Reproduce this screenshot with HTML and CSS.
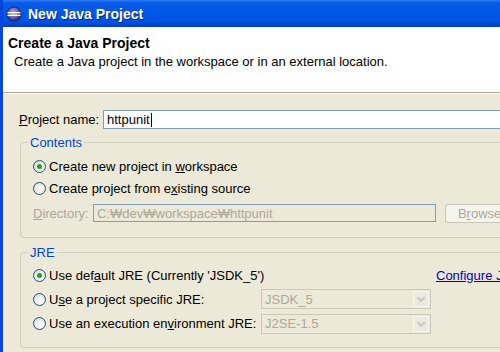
FILE: index.html
```html
<!DOCTYPE html>
<html lang="en">
<head>
    <meta charset="UTF-8">
    <title>New Java Project</title>
    <link rel="stylesheet" href="styles.css">
</head>
<body>
    <div class="window">
        <div class="titlebar">
            <svg class="app-icon" width="16" height="16" viewBox="0 0 16 16">
                <defs>
                    <radialGradient id="eg" cx="0.45" cy="0.4" r="0.6">
                        <stop offset="0" stop-color="#b8b4e8"/>
                        <stop offset="0.6" stop-color="#6a64b0"/>
                        <stop offset="1" stop-color="#2a2460"/>
                    </radialGradient>
                </defs>
                <circle cx="8" cy="8" r="7" fill="url(#eg)" stroke="#1e1a4a" stroke-width="0.8"/>
                <rect x="1.5" y="6" width="13" height="1.3" fill="#fff"/>
                <rect x="1.5" y="8.7" width="13" height="1.3" fill="#fff"/>
            </svg>
            <span class="title">New Java Project</span>
            <div class="title-btn"></div>
        </div>

        <div class="banner">
            <div class="banner-title">Create a Java Project</div>
            <div class="banner-desc">Create a Java project in the workspace or in an external location.</div>
        </div>

        <div class="content">
            <div class="name-row">
                <span class="name-label"><u>P</u>roject name:</span>
                <div class="field"><span>httpunit</span><span class="caret"></span></div>
            </div>

            <fieldset class="group group-contents">
                <legend>Contents</legend>
                <div class="option"><span class="radio checked"></span><span>Create new project in <u>w</u>orkspace</span></div>
                <div class="option"><span class="radio"></span><span>Create project from e<u>x</u>isting source</span></div>
                <div class="dir-row">
                    <span class="dir-label"><u>D</u>irectory:</span>
                    <div class="field disabled"><span>C:₩dev₩workspace₩httpunit</span></div>
                    <div class="btn">B<u>r</u>owse...</div>
                </div>
            </fieldset>

            <fieldset class="group group-jre">
                <legend>JRE</legend>
                <div class="jre-grid">
                    <div class="option span2"><span class="radio checked"></span><span>Use def<u>a</u>ult JRE (Currently 'JSDK_5')</span></div>
                    <a class="link" href="#">Configure JREs...</a>
                    <div class="option"><span class="radio"></span><span>U<u>s</u>e a project specific JRE:</span></div>
                    <div class="combo"><span>JSDK_5</span><span class="combo-btn"></span></div>
                    <div></div>
                    <div class="option"><span class="radio"></span><span>Use an execution en<u>v</u>ironment JRE:</span></div>
                    <div class="combo"><span>J2SE-1.5</span><span class="combo-btn"></span></div>
                    <div></div>
                </div>
            </fieldset>
        </div>
    </div>
</body>
</html>
```

FILE: styles.css
```css
body {
    margin: 0;
    background-color: #ece9d8;
    font-family: "Liberation Sans", "Noto Sans CJK KR", sans-serif;
    font-size: 13px;
    color: #000;
    overflow: hidden;
}
.window {
    width: 540px;
    height: 352px;
    border-left: 3px solid #0a46dc;
}
.titlebar {
    height: 27px;
    display: flex;
    align-items: center;
    padding-left: 3px;
    background: linear-gradient(#2a7df4 0, #0a5ae6 3px, #0058e8 50%, #0052e0 80%, #003fcc 100%);
}
.app-icon {
    margin-right: 6px;
}
.title {
    color: #fff;
    font-weight: bold;
    font-size: 14px;
    text-shadow: 1px 1px 0 #0a2a80;
}
.title-btn {
    margin-left: auto;
    margin-right: 20px;
    width: 19px;
    height: 19px;
    border: 1px solid #c8d8f8;
    border-radius: 3px;
    background: #2f6ff0;
}
.banner {
    background-color: #fff;
    height: 66px;
    border-bottom: 1px solid #aca899;
    padding-left: 5px;
    box-sizing: border-box;
}
.banner-title {
    font-weight: bold;
    font-size: 14px;
    line-height: 17px;
    padding-top: 8px;
}
.banner-desc {
    line-height: 15px;
    margin-top: 2px;
    padding-left: 6px;
}
.content {
    border-top: 1px solid #fff;
    padding: 16px 0 0 16px;
}
.name-row {
    display: flex;
    align-items: center;
    height: 19px;
}
.name-label {
    width: 84px;
}
.field {
    flex: 1;
    height: 19px;
    box-sizing: border-box;
    border: 1px solid #7f9db9;
    background-color: #fff;
    padding-left: 3px;
    display: flex;
    align-items: center;
    white-space: nowrap;
}
.caret {
    display: inline-block;
    width: 1px;
    height: 14px;
    background-color: #000;
    margin-left: 1px;
}
.group {
    margin: 6px 0 0 1px;
    border: 1px solid #d0d0bf;
    border-radius: 4px;
    padding: 0 0 0 12px;
}
.group legend {
    color: #0046d5;
    padding: 0 2px;
    margin-left: -5px;
    line-height: 15px;
}
.option {
    display: flex;
    align-items: center;
    height: 22px;
    white-space: nowrap;
}
.radio {
    flex: none;
    width: 13px;
    height: 13px;
    box-sizing: border-box;
    border: 1px solid #1c5180;
    border-radius: 50%;
    background: radial-gradient(circle at 65% 65%, #f6f6f2 30%, #d8d6cc 100%);
    margin-right: 3px;
    display: flex;
    align-items: center;
    justify-content: center;
}
.radio.checked::after {
    content: "";
    width: 5px;
    height: 5px;
    border-radius: 50%;
    background-color: #21a121;
}
.group-contents {
    padding-top: 5px;
    padding-bottom: 10px;
}
.dir-row {
    display: flex;
    align-items: center;
    height: 28px;
}
.dir-label {
    width: 60px;
    color: #aca899;
}
.dir-row .field {
    flex: none;
    width: 343px;
    height: 18px;
    background-color: #ece9d8;
    color: #aca899;
}
.btn {
    margin-left: 9px;
    width: 80px;
    height: 19px;
    box-sizing: border-box;
    border: 1px solid #c9c7ba;
    border-radius: 3px;
    background-color: #f5f4ea;
    color: #aca899;
    line-height: 17px;
    text-align: center;
}
.group-jre {
    margin-top: 7px;
    padding-top: 3px;
    padding-bottom: 11px;
}
.jre-grid {
    display: grid;
    grid-template-columns: 228px 170px auto;
    grid-template-rows: 24px 24px 25px;
    align-items: center;
}
.span2 {
    grid-column: 1 / 3;
}
.link {
    color: #0000d0;
    margin-left: 5px;
    white-space: nowrap;
}
.combo {
    height: 20px;
    box-sizing: border-box;
    border: 1px solid #cac8bb;
    color: #aca899;
    padding-left: 3px;
    display: flex;
    align-items: center;
    justify-content: space-between;
}
.combo-btn {
    width: 16px;
    height: 16px;
    margin-right: 1px;
    box-sizing: border-box;
    border: 1px solid #f6f5ef;
    background-color: #eceae0;
    position: relative;
}
.combo-btn::after {
    content: "";
    position: absolute;
    left: 4px;
    top: 3px;
    width: 4px;
    height: 4px;
    border-right: 2px solid #c9c7ba;
    border-bottom: 2px solid #c9c7ba;
    transform: rotate(45deg);
}
```
